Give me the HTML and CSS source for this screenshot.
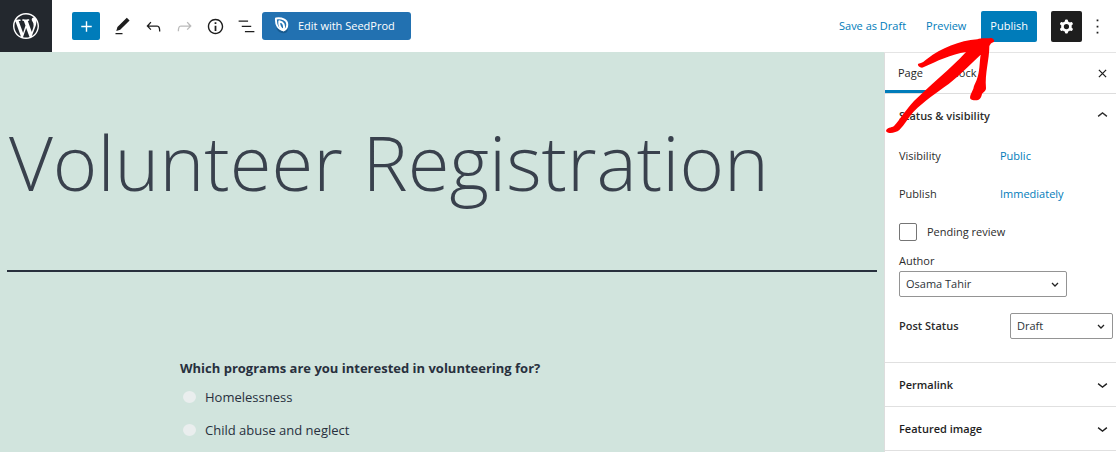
FILE: index.html
```html
<!DOCTYPE html>
<html lang="en">
<head>
<meta charset="utf-8">
<meta name="viewport" content="width=device-width, initial-scale=1">
<title>Edit Page</title>
<link rel="stylesheet" href="styles.css">
</head>
<body>
<div class="editor">
  <header class="topbar">
    <a class="wp-logo" href="#" aria-label="View pages">
      <svg viewBox="0 0 20 20" width="26" height="26"><path d="M20 10c0-5.51-4.49-10-10-10C4.48 0 0 4.49 0 10c0 5.52 4.48 10 10 10 5.51 0 10-4.48 10-10zM7.78 15.37L4.37 6.22c.55-.02 1.17-.08 1.17-.08.5-.06.44-1.13-.06-1.11 0 0-1.45.11-2.37.11-.18 0-.37 0-.58-.01C4.12 2.69 6.87 1.11 10 1.11c2.33 0 4.45.87 6.05 2.34-.68-.11-1.65.39-1.65 1.58 0 .74.45 1.36.9 2.1.35.61.55 1.36.55 2.46 0 1.49-1.4 5-1.4 5l-3.03-8.37c.54-.02.82-.17.82-.17.5-.05.44-1.25-.06-1.22 0 0-1.44.12-2.38.12-.87 0-2.33-.12-2.33-.12-.5-.03-.56 1.2-.06 1.22l.92.08 1.26 3.41zM17.41 10c.24-.64.74-1.87.43-4.25.7 1.29 1.05 2.71 1.05 4.25 0 3.29-1.73 6.24-4.4 7.78.97-2.59 1.94-5.2 2.92-7.78zM6.1 18.09C3.12 16.65 1.11 13.53 1.11 10c0-1.3.23-2.48.72-3.59C3.25 10.3 4.67 14.2 6.1 18.09zm4.03-6.63l2.58 6.98c-.86.29-1.76.45-2.71.45-.79 0-1.57-.11-2.29-.33.81-2.38 1.62-4.74 2.42-7.1z"/></svg>
    </a>
    <div class="tools">
      <button class="add" type="button" aria-label="Add block"><svg class="icon" viewBox="0 0 24 24"><path d="M18 11.2h-5.2V6h-1.6v5.2H6v1.6h5.2V18h1.6v-5.2H18z"/></svg></button>
      <button class="tool" type="button" aria-label="Tools"><svg class="icon" viewBox="0 0 24 24"><path d="M20.1 5.1L16.9 2 6.2 12.7l-1.3 4.4 4.5-1.3L20.1 5.1zM4 20.8h8v-1.5H4v1.5z"/></svg></button>
      <button class="tool" type="button" aria-label="Undo"><svg class="icon" viewBox="0 0 24 24"><path d="M18.3 11.7c-.6-.6-1.4-.9-2.3-.9H6.7l2.9-3.3-1.1-1-4.5 5L8.5 16l1-1-2.7-2.7H16c.5 0 .9.2 1.3.5 1 1 1 3.4 1 4.5v.3h1.5v-.2c0-1.5 0-4.3-1.5-5.7z"/></svg></button>
      <button class="tool" type="button" aria-label="Redo" disabled><svg class="icon" viewBox="0 0 24 24"><path d="M15.6 6.5l-1.1 1 2.9 3.3H8c-.9 0-1.7.3-2.3.9-1.4 1.5-1.4 4.2-1.4 5.6v.2h1.5v-.3c0-1.1 0-3.5 1-4.5.3-.3.7-.5 1.3-.5h9.2L14.5 15l1.1 1.1 4.6-4.6-4.6-5z"/></svg></button>
      <button class="tool" type="button" aria-label="Details"><svg class="icon" viewBox="0 0 24 24"><path d="M12 3.2c-4.8 0-8.8 3.9-8.8 8.8 0 4.8 3.9 8.8 8.8 8.8 4.8 0 8.8-3.9 8.8-8.8 0-4.8-4-8.8-8.8-8.8zm0 16c-4 0-7.2-3.3-7.2-7.2C4.8 8 8 4.8 12 4.8s7.2 3.3 7.2 7.2c0 4-3.2 7.2-7.2 7.2zM11 17h2v-6h-2v6zm0-8h2V7h-2v2z"/></svg></button>
      <button class="tool" type="button" aria-label="List view"><svg class="icon" viewBox="0 0 24 24"><path d="M13.8 5.2H3v1.5h10.8V5.2zm-3.6 12v1.5H21v-1.5H10.2zm7.2-6H6.6v1.5h10.8v-1.5z"/></svg></button>
      <button class="seedprod" type="button">
        <svg viewBox="0 0 16 18" width="16" height="18"><path class="leaf-shade" d="M2 11C4 15 9 18 13 15C14 13 14 11 13 9L8 13Z"/><path class="leaf" d="M2 1.5C8 .8 13 2.500 13.200 7C13.400 10 12 12.300 9.600 13.300C4.500 12.500 1.500 8 2 1.500Z"/><path class="leaf" d="M5.300 4.300C9.500 5 11 8.500 9.600 13.300C6 11 4.800 8 5.300 4.300Z"/></svg>
        <span>Edit with SeedProd</span>
      </button>
    </div>
    <div class="actions">
      <button class="link" type="button">Save as Draft</button>
      <button class="link" type="button">Preview</button>
      <button class="publish" type="button">Publish</button>
      <button class="settings" type="button" aria-label="Settings"><svg class="icon" viewBox="0 0 24 24"><path fill-rule="evenodd" d="M10.289 4.836A1 1 0 0111.275 4h1.306a1 1 0 01.987.836l.244 1.466c.787.26 1.503.679 2.108 1.218l1.393-.522a1 1 0 011.216.437l.653 1.130a1 1 0 01-.23 1.273l-1.148.944a6.025 6.025 0 010 2.435l1.149.946a1 1 0 01.23 1.272l-.653 1.130a1 1 0 01-1.216.437l-1.394-.522c-.605.54-1.320.958-2.108 1.218l-.244 1.466a1 1 0 01-.987.836h-1.306a1 1 0 01-.986-.836l-.244-1.466a5.995 5.995 0 01-2.108-1.218l-1.394.522a1 1 0 01-1.217-.436l-.653-1.131a1 1 0 01.23-1.272l1.149-.946a6.026 6.026 0 010-2.435l-1.148-.944a1 1 0 01-.23-1.272l.653-1.131a1 1 0 011.217-.437l1.393.522a5.994 5.994 0 012.108-1.218l.244-1.466zM14.929 12a3 3 0 11-6 0 3 3 0 016 0z"/></svg></button>
      <button class="more" type="button" aria-label="Options"><svg class="icon" viewBox="0 0 24 24"><path d="M11 4h2v2h-2zM11 11h2v2h-2zM11 18h2v2h-2z"/></svg></button>
    </div>
  </header>

  <div class="workspace">
    <main class="canvas">
      <h1 class="title">Volunteer Registration</h1>
      <hr class="rule">
      <fieldset class="question">
        <legend>Which programs are you interested in volunteering for?</legend>
        <label class="choice"><input type="radio" name="program"><span>Homelessness</span></label>
        <label class="choice"><input type="radio" name="program"><span>Child abuse and neglect</span></label>
      </fieldset>
    </main>

    <aside class="sidebar">
      <div class="tabs">
        <button class="tab active" type="button">Page</button>
        <button class="tab" type="button">Block</button>
        <button class="close" type="button" aria-label="Close settings"><svg viewBox="0 0 10 10" width="9" height="9"><path d="M1 1l8 8M9 1l-8 8"/></svg></button>
      </div>
      <section class="panel status">
        <h2><button class="toggle" type="button" aria-expanded="true"><span>Status &amp; visibility</span><svg class="icon" viewBox="0 0 24 24"><path d="M6.500 12.400L12 8l5.500 4.400-.9 1.200L12 10l-4.500 3.600-1-1.200z"/></svg></button></h2>
        <div class="row"><span>Visibility</span><button class="link" type="button">Public</button></div>
        <div class="row"><span>Publish</span><button class="link" type="button">Immediately</button></div>
        <label class="check"><input type="checkbox"><span>Pending review</span></label>
        <div class="author">
          <label for="author">Author</label>
          <select id="author"><option>Osama Tahir</option></select>
        </div>
        <div class="post-status">
          <label for="status">Post Status</label>
          <select id="status"><option>Draft</option></select>
        </div>
      </section>
      <section class="panel"><h2><button class="toggle" type="button" aria-expanded="false"><span>Permalink</span><svg class="icon" viewBox="0 0 24 24"><path d="M17.500 11.600L12 16l-5.500-4.400.9-1.200L12 14l4.500-3.600 1 1.200z"/></svg></button></h2></section>
      <section class="panel"><h2><button class="toggle" type="button" aria-expanded="false"><span>Featured image</span><svg class="icon" viewBox="0 0 24 24"><path d="M17.500 11.600L12 16l-5.500-4.400.9-1.200L12 14l4.500-3.600 1 1.200z"/></svg></button></h2></section>
    </aside>
  </div>

  <svg class="arrow" viewBox="0 0 360 330" width="120" height="110" aria-hidden="true"><path d="M18 303C20 292 34 294 42 288C62 266 78 238 102 213C150 166 208 120 258 66C214 72 170 94 130 112C122 116 110 106 115 101C126 100 134 92 142 86C184 54 238 32 292 28C304 22 320 26 332 24C340 24 346 32 340 37C334 38 331 43 328 48C328 90 314 130 318 174C318 184 310 186 306 192C304 200 302 207 296 209C288 212 276 211 271 206C268 198 276 186 280 176C282 166 286 160 290 150C300 124 298 98 302 74C272 102 240 134 206 162C172 186 134 212 100 246C86 262 74 284 58 300C48 308 24 314 18 303Z"/></svg>
</div>
</body>
</html>
```
FILE: styles.css
```css
* { box-sizing: border-box; }

body {
  margin: 0;
  font-family: "Open Sans", "Noto Sans", sans-serif;
  font-size: 11px;
  line-height: 16px;
  color: #1e1e1e;
  background: #fff;
}

button {
  margin: 0;
  padding: 0;
  border: 0;
  background: none;
  font: inherit;
  color: inherit;
  cursor: pointer;
}

svg { display: block; fill: currentColor; flex: none; }
.icon { width: 21px; height: 21px; }

.editor {
  position: relative;
  display: flex;
  flex-direction: column;
  height: 100vh;
  overflow: hidden;
}

/* Top bar */
.topbar {
  display: flex;
  align-items: center;
  flex: none;
  height: 52px;
}

.wp-logo {
  display: grid;
  place-items: center;
  width: 52px;
  height: 52px;
  color: #fff;
  background: #23282e;
}

.tools { display: flex; align-items: center; margin-left: 20px; }

.add {
  display: grid;
  place-items: center;
  width: 28px;
  height: 28px;
  margin-right: 7px;
  border-radius: 2px;
  color: #fff;
  background: #007cba;
}

.tool { display: grid; place-items: center; width: 31px; height: 31px; }
.tool:disabled { color: #bbb; }

.seedprod {
  display: flex;
  align-items: center;
  gap: 8px;
  height: 28px;
  padding: 0 16px 0 12px;
  border-radius: 3px;
  color: #fff;
  background: #2271b1;
}

.leaf { fill: none; stroke: #fff; stroke-width: 2; stroke-linejoin: round; }
.leaf-shade { fill: #175a90; }

.actions { display: flex; align-items: center; margin-left: auto; }
.link { color: #007cba; }
.actions .link { margin-right: 20px; }

.publish {
  height: 31px;
  padding: 0 9px;
  margin-left: -5px;
  border-radius: 2px;
  color: #fff;
  background: #007cba;
}

.settings {
  display: grid;
  place-items: center;
  width: 31px;
  height: 31px;
  margin-left: 14px;
  border-radius: 2px;
  color: #fff;
  background: #1e1e1e;
}

.more { display: grid; place-items: center; width: 31px; height: 31px; margin-right: 3px; }

/* Canvas */
.workspace { display: flex; flex: 1; min-height: 0; }

.canvas {
  flex: 1;
  min-width: 0;
  padding: 60px 7px 0 7px;
  color: #28303d;
  background: #d1e4dd;
}

.title {
  margin: 0;
  padding-left: 2px;
  font-size: 76px;
  font-weight: 300;
  line-height: 100px;
  color: #39414d;
  white-space: nowrap;
}

.rule { height: 2px; margin: 58px 0 0; border: 0; background: #28303d; }

.question { margin: 86px 0 0 173px; padding: 0; border: 0; font-size: 13px; line-height: 20px; }
.question legend { padding: 0; font-weight: 700; }
.choice { display: flex; align-items: center; gap: 9px; margin: 9px 0 13px 3px; }
.choice input {
  appearance: none;
  width: 13px;
  height: 12px;
  margin: 0;
  border-radius: 50%;
  background: #eaeeee;
}

/* Settings sidebar */
.sidebar {
  flex: none;
  width: 232px;
  border-left: 1px solid #ddd;
  border-top: 1px solid #e4e4e4;
  background: #fff;
}

.tabs { display: flex; height: 41px; border-bottom: 1px solid #ddd; }
.tab { padding: 0 13px; font-weight: 500; }
.tab.active { box-shadow: inset 0 -3px #007cba; }
.close { display: grid; place-items: center; width: 28px; margin-left: auto; }
.close svg { fill: none; stroke: currentColor; stroke-width: 1.4; }

.panel { padding: 0 3px 0 14px; border-bottom: 1px solid #e0e0e0; }
.panel h2 { margin: 0; font-size: 11px; font-weight: 600; }
.toggle {
  display: flex;
  align-items: center;
  justify-content: space-between;
  width: 100%;
  height: 43px;
}

.status { padding-bottom: 23px; color: #2c2c2c; }
.row { display: grid; grid-template-columns: 101px 1fr; align-items: center; height: 38px; }
.row .link { justify-self: start; }
.check { display: flex; align-items: center; gap: 10px; height: 38px; }
.check input {
  appearance: none;
  width: 18px;
  height: 18px;
  margin: 0;
  border: 1px solid #757575;
  border-radius: 2px;
}

.author { display: flex; flex-direction: column; gap: 2px; margin-top: 2px; }
.author select { width: 168px; }
.post-status { display: flex; align-items: center; justify-content: space-between; margin-top: 16px; font-weight: 600; }
.post-status select { width: 103px; }

select {
  appearance: none;
  height: 26px;
  padding: 0 20px 0 6px;
  border: 1px solid #949494;
  border-radius: 2px;
  font: inherit;
  font-weight: 400;
  color: #2c3338;
  background: #fff url("data:image/svg+xml,%3Csvg xmlns='http://www.w3.org/2000/svg' viewBox='0 0 8 5'%3E%3Cpath d='M1 1l3 3 3-3' fill='none' stroke='%23222' stroke-width='1.300'/%3E%3C/svg%3E") no-repeat right 7px center / 8px 5px;
}

/* Hand-drawn pointer laid over the interface */
.arrow { position: absolute; top: 30px; right: 116px; color: #f00; pointer-events: none; }
```
